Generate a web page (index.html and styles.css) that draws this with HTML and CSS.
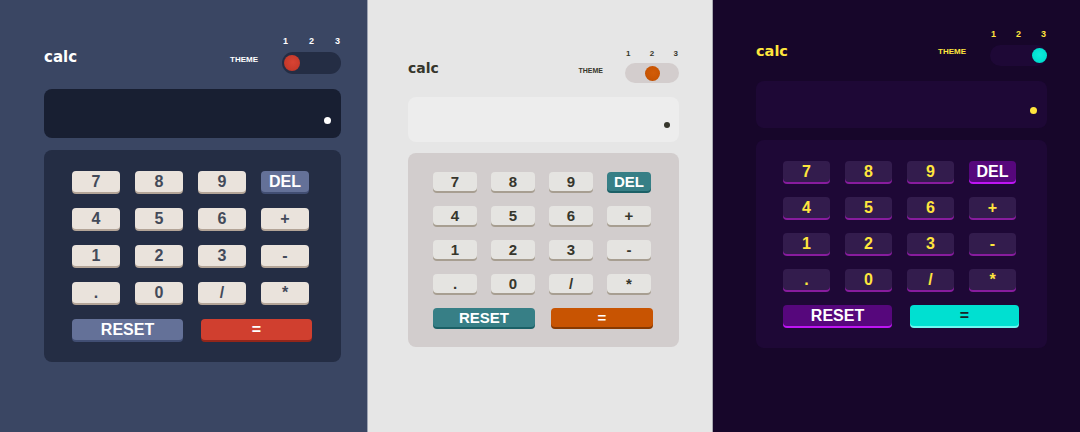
FILE: index.html
```html
<!DOCTYPE html>
<html lang="en">
<head>
<meta charset="utf-8">
<title>calc themes</title>
<link rel="stylesheet" href="styles.css">
</head>
<body>
<main class="row">
  <section class="panel t1">
    <div class="calc">
      <header class="head">
        <h1 class="logo">calc</h1>
        <div class="theme">
          <span class="theme-label">THEME</span>
          <div class="switch">
            <div class="nums"><span>1</span><span>2</span><span>3</span></div>
            <div class="track"><span class="knob"></span></div>
          </div>
        </div>
      </header>
      <div class="screen"><span class="dot"></span></div>
      <div class="keypad">
        <div class="keys">
          <button class="key">7</button><button class="key">8</button><button class="key">9</button><button class="key alt">DEL</button>
          <button class="key">4</button><button class="key">5</button><button class="key">6</button><button class="key">+</button>
          <button class="key">1</button><button class="key">2</button><button class="key">3</button><button class="key">-</button>
          <button class="key">.</button><button class="key">0</button><button class="key">/</button><button class="key">*</button>
        </div>
        <div class="wide">
          <button class="key alt w">RESET</button><button class="key eq w">=</button>
        </div>
      </div>
    </div>
  </section>

  <section class="panel t2">
    <div class="calc">
      <header class="head">
        <h1 class="logo">calc</h1>
        <div class="theme">
          <span class="theme-label">THEME</span>
          <div class="switch">
            <div class="nums"><span>1</span><span>2</span><span>3</span></div>
            <div class="track"><span class="knob"></span></div>
          </div>
        </div>
      </header>
      <div class="screen"><span class="dot"></span></div>
      <div class="keypad">
        <div class="keys">
          <button class="key">7</button><button class="key">8</button><button class="key">9</button><button class="key alt">DEL</button>
          <button class="key">4</button><button class="key">5</button><button class="key">6</button><button class="key">+</button>
          <button class="key">1</button><button class="key">2</button><button class="key">3</button><button class="key">-</button>
          <button class="key">.</button><button class="key">0</button><button class="key">/</button><button class="key">*</button>
        </div>
        <div class="wide">
          <button class="key alt w">RESET</button><button class="key eq w">=</button>
        </div>
      </div>
    </div>
  </section>

  <section class="panel t3">
    <div class="calc">
      <header class="head">
        <h1 class="logo">calc</h1>
        <div class="theme">
          <span class="theme-label">THEME</span>
          <div class="switch">
            <div class="nums"><span>1</span><span>2</span><span>3</span></div>
            <div class="track"><span class="knob"></span></div>
          </div>
        </div>
      </header>
      <div class="screen"><span class="dot"></span></div>
      <div class="keypad">
        <div class="keys">
          <button class="key">7</button><button class="key">8</button><button class="key">9</button><button class="key alt">DEL</button>
          <button class="key">4</button><button class="key">5</button><button class="key">6</button><button class="key">+</button>
          <button class="key">1</button><button class="key">2</button><button class="key">3</button><button class="key">-</button>
          <button class="key">.</button><button class="key">0</button><button class="key">/</button><button class="key">*</button>
        </div>
        <div class="wide">
          <button class="key alt w">RESET</button><button class="key eq w">=</button>
        </div>
      </div>
    </div>
  </section>
</main>
</body>
</html>
```
FILE: styles.css
```css
* { box-sizing: border-box; }
html, body { margin: 0; padding: 0; }
body {
  width: 1080px;
  height: 432px;
  overflow: hidden;
  font-family: "Liberation Sans", Arial, sans-serif;
}
.row { display: flex; height: 432px; }

.panel {
  height: 432px;
  padding-top: var(--top);
  padding-left: var(--left);
  background: var(--bg);
  color: var(--head);
}

.t1 {
  width: 367px;
  --bg: #3a4663; --head: #ffffff;
  --left: 44px; --w: 297px; --top: 36px;
  --logo-fs: 15px; --logo-mb: 9px;
  --th-fs: 8px; --th-mb: 10px; --th-mr: 24px;
  --num-fs: 9px; --num-lh: 10px; --num-gap: 6px;
  --tog-w: 59px; --tog-h: 22px; --tog-bg: #242d44; --tog-pad: 0 2px; --tog-just: flex-start;
  --knob: 16px; --knob-bg: radial-gradient(circle at 55% 45%, #d84333 0%, #c73a2b 60%, #a92e21 100%);
  --disp-mt: 15px; --disp-h: 49px; --disp-bg: #181f32; --dot: 7px; --dot-r: 10px; --dot-b: 14px; --dot-c: #ffffff;
  --pad-mt: 12px; --pad-h: 212px; --pad-pt: 21px; --pad-pl: 28px; --pad-bg: #242d44;
  --key-w: 48px; --key-h: 21px; --cgap: 15px; --rgap: 16px; --key-fs: 16px; --wide-w: 111px; --wide-gap: 18px;
  --key-bg: #eae3dc; --key-sh: #b3a497; --key-c: #434a59;
  --alt-bg: #647198; --alt-sh: #414e73; --alt-c: #ffffff;
  --eq-bg: #d03f2f; --eq-sh: #93261a; --eq-c: #ffffff;
}
.t2 {
  width: 346px;
  border-left: 1px solid #9ea4b3;
  border-right: 1px solid #a9a9b1;
  --bg: #e6e6e6; --head: #36362c;
  --left: 40px; --w: 271px; --top: 50px;
  --logo-fs: 14px; --logo-mb: 8px;
  --th-fs: 7px; --th-mb: 9px; --th-mr: 22px;
  --num-fs: 8px; --num-lh: 8px; --num-gap: 5px;
  --tog-w: 54px; --tog-h: 20px; --tog-bg: #d3cdcd; --tog-pad: 0 0 0 1px; --tog-just: center;
  --knob: 15px; --knob-bg: radial-gradient(circle at 55% 45%, #d25c08 0%, #c85402 60%, #a84500 100%);
  --disp-mt: 14px; --disp-h: 45px; --disp-bg: #ededed; --dot: 6px; --dot-r: 9px; --dot-b: 14px; --dot-c: #36362c;
  --pad-mt: 11px; --pad-h: 194px; --pad-pt: 19px; --pad-pl: 25px; --pad-bg: #d2cdcd;
  --key-w: 44px; --key-h: 19px; --cgap: 14px; --rgap: 15px; --key-fs: 15px; --wide-w: 102px; --wide-gap: 16px;
  --key-bg: #e5e4e1; --key-sh: #a79e91; --key-c: #36362c;
  --alt-bg: #377f86; --alt-sh: #1b6066; --alt-c: #ffffff;
  --eq-bg: #c85402; --eq-sh: #873901; --eq-c: #ffffff;
}
.t3 {
  width: 367px;
  --bg: #17062a; --head: #ffe53d;
  --left: 43px; --w: 291px; --top: 29px;
  --logo-fs: 14.5px; --logo-mb: 8px;
  --th-fs: 8px; --th-mb: 10px; --th-mr: 24px;
  --num-fs: 9px; --num-lh: 10px; --num-gap: 6px;
  --tog-w: 57px; --tog-h: 21px; --tog-bg: #1e0836; --tog-pad: 0 0 0 0; --tog-just: flex-end;
  --knob: 15px; --knob-bg: radial-gradient(circle at 50% 45%, #10ebdc 0%, #00e0d1 60%, #00c4b7 100%);
  --disp-mt: 15px; --disp-h: 47px; --disp-bg: #1e0836; --dot: 7px; --dot-r: 10px; --dot-b: 14px; --dot-c: #ffe53d;
  --pad-mt: 12px; --pad-h: 208px; --pad-pt: 21px; --pad-pl: 27px; --pad-bg: #1e0836;
  --key-w: 47px; --key-h: 21px; --cgap: 15px; --rgap: 15px; --key-fs: 16px; --wide-w: 109px; --wide-gap: 18px;
  --key-bg: #331c4d; --key-sh: #881c9e; --key-c: #ffe53d;
  --alt-bg: #56077c; --alt-sh: #be15f4; --alt-c: #ffffff;
  --eq-bg: #00e0d1; --eq-sh: #6cf9f1; --eq-c: #1a2327;
}

.calc { width: var(--w); }

.head {
  display: flex;
  justify-content: space-between;
  align-items: flex-end;
}
.logo {
  margin: 0 0 var(--logo-mb) 0;
  font-family: "DejaVu Sans", "Liberation Sans", sans-serif;
  font-weight: 700;
  font-size: var(--logo-fs);
  line-height: var(--logo-fs);
  letter-spacing: 0;
}
.theme {
  display: flex;
  align-items: flex-end;
}
.theme-label {
  font-weight: 700;
  font-size: var(--th-fs);
  line-height: var(--th-fs);
  margin: 0 var(--th-mr) var(--th-mb) 0;
}
.switch { width: var(--tog-w); }
.nums {
  display: flex;
  justify-content: space-between;
  padding: 0 1px;
  font-weight: 700;
  font-size: var(--num-fs);
  line-height: var(--num-lh);
  margin-bottom: var(--num-gap);
}
.track {
  height: var(--tog-h);
  border-radius: 12px;
  background: var(--tog-bg);
  display: flex;
  align-items: center;
  justify-content: var(--tog-just);
  padding: var(--tog-pad);
}
.knob {
  width: var(--knob);
  height: var(--knob);
  border-radius: 50%;
  background: var(--knob-bg);
}

.screen {
  margin-top: var(--disp-mt);
  height: var(--disp-h);
  border-radius: 8px;
  background: var(--disp-bg);
  display: flex;
  justify-content: flex-end;
  align-items: flex-end;
  padding: 0 var(--dot-r) var(--dot-b) 0;
}
.dot {
  width: var(--dot);
  height: var(--dot);
  border-radius: 50%;
  background: var(--dot-c);
}

.keypad {
  margin-top: var(--pad-mt);
  height: var(--pad-h);
  border-radius: 8px;
  background: var(--pad-bg);
  padding: var(--pad-pt) 0 0 var(--pad-pl);
}
.keys {
  display: grid;
  grid-template-columns: repeat(4, var(--key-w));
  column-gap: var(--cgap);
  row-gap: var(--rgap);
}
.wide {
  display: flex;
  gap: var(--wide-gap);
  margin-top: var(--rgap);
}
.key {
  border: 0;
  margin: 0;
  padding: 0;
  height: var(--key-h);
  width: var(--key-w);
  border-radius: 4px;
  font-family: "Liberation Sans", Arial, sans-serif;
  font-weight: 700;
  font-size: var(--key-fs);
  line-height: var(--key-h);
  text-align: center;
  background: var(--key-bg);
  color: var(--key-c);
  box-shadow: 0 2px 0 var(--key-sh);
}
.key.w { width: var(--wide-w); }
.key.alt { background: var(--alt-bg); color: var(--alt-c); box-shadow: 0 2px 0 var(--alt-sh); }
.key.eq { background: var(--eq-bg); color: var(--eq-c); box-shadow: 0 2px 0 var(--eq-sh); }
```
